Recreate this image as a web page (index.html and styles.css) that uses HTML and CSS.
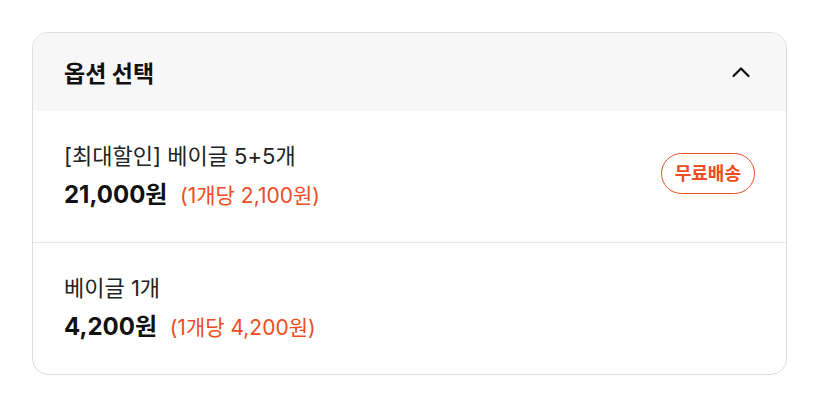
FILE: index.html
```html
<!DOCTYPE html>
<html lang="ko">
  <head>
    <meta charset="UTF-8" />
    <meta name="viewport" content="width=device-width, initial-scale=1.0">
    <title>옵션 선택</title>
    <link rel="stylesheet" href="styles.css">
  </head>
  <body>
    <div class="option-box">
      <div class="option-head">
        <h3 class="option-title">옵션 선택</h3>
        <span class="toggle">
          <svg width="24" height="24" viewBox="0 0 24 24" fill="none">
            <path d="M4.5 16 L12 8.5 L19.5 16" stroke="#111" stroke-width="2.2" stroke-linecap="round" stroke-linejoin="round" />
          </svg>
        </span>
      </div>

      <div class="option-item">
        <div class="item-info">
          <p class="item-name">[최대할인] 베이글 5+5개</p>
          <p class="item-price">21,000원 <span class="unit">(1개당 2,100원)</span></p>
        </div>
        <span class="badge">무료배송</span>
      </div>

      <div class="option-item">
        <div class="item-info">
          <p class="item-name">베이글 1개</p>
          <p class="item-price">4,200원 <span class="unit">(1개당 4,200원)</span></p>
        </div>
      </div>
    </div>
  </body>
</html>
```

FILE: styles.css
```css
body {
  margin: 0;
  padding: 32px;
  background: #fff;
  font-family: Inter, "Noto Sans CJK KR", sans-serif;
  color: #111;
}

.option-box {
  width: 755px;
  box-sizing: border-box;
  border: 1px solid #dcdcdc;
  border-radius: 16px;
  overflow: hidden;
}

.option-head {
  display: flex;
  align-items: center;
  justify-content: space-between;
  height: 78px;
  padding: 0 33px 0 31px;
  background: #f7f7f7;
}

.option-title {
  margin: 0;
  font-size: 23px;
  font-weight: 700;
}

.toggle {
  display: flex;
}

.option-item {
  display: flex;
  align-items: center;
  justify-content: space-between;
  padding: 31px 31px 31px 31px;
  border-top: 1px solid #e6e6e6;
}

.option-head + .option-item {
  border-top: none;
}

.item-info p {
  margin: 0;
}

.item-name {
  font-size: 22px;
  line-height: 28px;
  color: #222;
}

.item-price {
  margin-top: 10px !important;
  font-size: 24px;
  line-height: 30px;
  font-weight: 700;
}

.unit {
  margin-left: 7px;
  font-size: 21px;
  font-weight: 400;
  color: #ee4d1f;
}

.badge {
  display: inline-block;
  padding: 8px 13px;
  border: 1px solid #ee4d1f;
  border-radius: 21px;
  color: #ee4d1f;
  font-size: 18px;
  font-weight: 700;
  line-height: 23px;
  margin-bottom: 7px;
}
```
